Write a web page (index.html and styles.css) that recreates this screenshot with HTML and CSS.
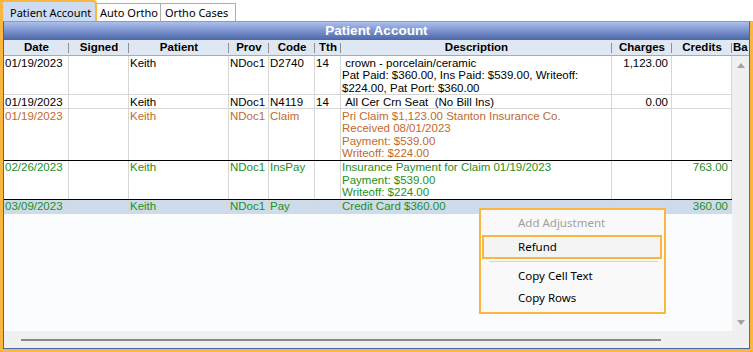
FILE: index.html
```html
<!DOCTYPE html>
<html lang="en">
  <head>
    <meta charset="UTF-8" />
    <meta name="viewport" content="width=device-width, initial-scale=1.0" />
    <title>Patient Account</title>
    <link rel="stylesheet" href="styles.css">
  </head>
  <body>
    <!-- Tab strip -->
    <div class="tabs">
      <div class="tab active">Patient Account</div>
      <div class="tab auto">Auto Ortho</div>
      <div class="tab cases">Ortho Cases</div>
    </div>

    <div class="panel">
      <div class="grid">
        <div class="grid-title">Patient Account</div>

        <div class="grid-head">
          <div>Date</div>
          <div>Signed</div>
          <div>Patient</div>
          <div>Prov</div>
          <div>Code</div>
          <div>Tth</div>
          <div>Description</div>
          <div>Charges</div>
          <div>Credits</div>
          <div class="ba">Ba</div>
        </div>

        <div class="grid-body">
          <div class="rows">
            <div class="row">
              <div>01/19/2023</div>
              <div></div>
              <div>Keith</div>
              <div>NDoc1</div>
              <div>D2740</div>
              <div>14</div>
              <div class="desc">&nbsp;crown - porcelain/ceramic<br>Pat Paid: $360.00, Ins Paid: $539.00, Writeoff:<br>$224.00, Pat Port: $360.00</div>
              <div class="num">1,123.00</div>
              <div class="num"></div>
            </div>
            <div class="row">
              <div>01/19/2023</div>
              <div></div>
              <div>Keith</div>
              <div>NDoc1</div>
              <div>N4119</div>
              <div>14</div>
              <div class="desc">&nbsp;All Cer Crn Seat&nbsp; (No Bill Ins)</div>
              <div class="num">0.00</div>
              <div class="num"></div>
            </div>
            <div class="row claim split">
              <div>01/19/2023</div>
              <div></div>
              <div>Keith</div>
              <div>NDoc1</div>
              <div>Claim</div>
              <div></div>
              <div class="desc">Pri Claim $1,123.00 Stanton Insurance Co.<br>Received 08/01/2023<br>Payment: $539.00<br>Writeoff: $224.00</div>
              <div class="num"></div>
              <div class="num"></div>
            </div>
            <div class="row paid split">
              <div>02/26/2023</div>
              <div></div>
              <div>Keith</div>
              <div>NDoc1</div>
              <div>InsPay</div>
              <div></div>
              <div class="desc">Insurance Payment for Claim 01/19/2023<br>Payment: $539.00<br>Writeoff: $224.00</div>
              <div class="num"></div>
              <div class="num">763.00</div>
            </div>
            <div class="row paid selected">
              <div>03/09/2023</div>
              <div></div>
              <div>Keith</div>
              <div>NDoc1</div>
              <div>Pay</div>
              <div></div>
              <div class="desc">Credit Card $360.00</div>
              <div class="num"></div>
              <div class="num">360.00</div>
            </div>
          </div>

          <div class="vscroll">
            <span class="arrow up"></span>
            <span class="arrow down"></span>
          </div>
        </div>

        <div class="hscroll"><div class="thumb"></div></div>
      </div>
    </div>

    <!-- Right-click menu -->
    <div class="menu">
      <div class="menu-item disabled">Add Adjustment</div>
      <div class="menu-item hot">Refund</div>
      <div class="menu-sep"></div>
      <div class="menu-item">Copy Cell Text</div>
      <div class="menu-item">Copy Rows</div>
    </div>
  </body>
</html>
```

FILE: styles.css
```css
/* Basic reset */
body {
  margin: 0;
  width: 753px;
  height: 352px;
  overflow: hidden;
  background-color: #fff;
  font-family: "Liberation Sans", Arial, sans-serif;
  color: #000;
  position: relative;
}

/* Tabs */
.tabs {
  display: flex;
  height: 21px;
  font-family: "Noto Sans", sans-serif;
  font-size: 11px;
}

.tab {
  box-sizing: border-box;
  line-height: 16px;
  background-color: #fdfdfd;
  border-top: 1px solid #adadad;
  border-right: 1px solid #adadad;
  margin-top: 3px;
}

.tab.active {
  width: 97px;
  margin-top: 0;
  padding: 3px 0 0 7px;
  background-color: #cddcf1;
  border: 2px solid #f9b640;
  border-left-width: 3px;
  border-bottom: none;
  border-top-right-radius: 4px;
}

.tab.auto {
  width: 64px;
  padding: 1px 0 0 3px;
}

.tab.cases {
  width: 75px;
  padding: 1px 0 0 4px;
}

/* Outer orange frame */
.panel {
  border: 3px solid #f9b640;
  border-top: none;
}

.grid {
  border: 1px solid #4a64a8;
  border-top-color: #8c9ac0;
  display: flex;
  flex-direction: column;
}

.grid-title {
  height: 18px;
  line-height: 18px;
  text-align: center;
  color: #fff;
  font-weight: bold;
  font-size: 13.5px;
  background: linear-gradient(#abc0ec, #7b92cd 50%, #4a66a7);
}

.grid-head {
  display: grid;
  grid-template-columns: 65px 60px 100px 40px 46px 26px 271px 60px 60px 17px;
  height: 15px;
  line-height: 15px;
  background-color: #dfe7f2;
  border-bottom: 1px solid #a3abb8;
  font-weight: bold;
  font-size: 11.5px;
}

.grid-head div {
  position: relative;
  text-align: center;
  overflow: hidden;
  white-space: nowrap;
}

.grid-head div::after {
  content: "";
  position: absolute;
  right: 0;
  top: 3px;
  bottom: 2px;
  width: 1px;
  background-color: #8f8f8f;
}

.grid-head .ba {
  text-align: left;
  padding-left: 1px;
}

.grid-head .ba::after {
  display: none;
}

.grid-body {
  display: flex;
  height: 275px;
}

.rows {
  width: 728px;
  background-color: #fbfcfe;
  font-size: 11.5px;
}

.row {
  display: grid;
  grid-template-columns: 65px 60px 100px 40px 46px 26px 271px 60px 60px;
  line-height: 12.5px;
  background-color: #fff;
  border-bottom: 1px solid #d7d7d7;
}

.row > div {
  border-right: 1px solid #d7d7d7;
  padding: 0.5px 0 0 1px;
  white-space: nowrap;
  overflow: hidden;
}

.row .num {
  text-align: right;
  padding-right: 3px;
}

.row.split {
  border-bottom-color: #000;
}

.row.claim {
  color: #c2692d;
}

.row.paid {
  color: #23901c;
}

.row.selected {
  background-color: #cddbea;
  border-bottom: none;
  height: 14px;
}

/* Scrollbars */
.vscroll {
  width: 17px;
  background-color: #f0f0f0;
  display: flex;
  flex-direction: column;
  justify-content: space-between;
  align-items: center;
  padding: 7px 0 6px;
  box-sizing: border-box;
}

.arrow {
  width: 0;
  height: 0;
  border-left: 4px solid transparent;
  border-right: 4px solid transparent;
}

.arrow.up {
  border-bottom: 5px solid #a3a3a3;
}

.arrow.down {
  border-top: 5px solid #a3a3a3;
}

.hscroll {
  height: 17px;
  background-color: #f0f0f0;
  padding-top: 8px;
  box-sizing: border-box;
}

.hscroll .thumb {
  margin-left: 17px;
  width: 640px;
  height: 2px;
  background-color: #888;
}

/* Context menu */
.menu {
  position: absolute;
  left: 479px;
  top: 208px;
  width: 183px;
  height: 100px;
  padding-top: 2px;
  box-sizing: content-box;
  background-color: #f9f9f9;
  border: 2px solid #fbb642;
  font-family: "Noto Sans", sans-serif;
  font-size: 11.5px;
}

.menu-item {
  height: 22px;
  line-height: 22px;
  padding-left: 37px;
}

.menu-item.disabled {
  color: #a0a0a0;
}

.menu-item.hot {
  margin: 1px 2px 0 1px;
  height: 20px;
  line-height: 20px;
  padding-left: 34px;
  border: 2px solid #fbb642;
  background-color: #f4f4f4;
}

.menu-sep {
  height: 1px;
  margin: 2px 6px 3px 8px;
  background-color: #d3d3d3;
}
```
